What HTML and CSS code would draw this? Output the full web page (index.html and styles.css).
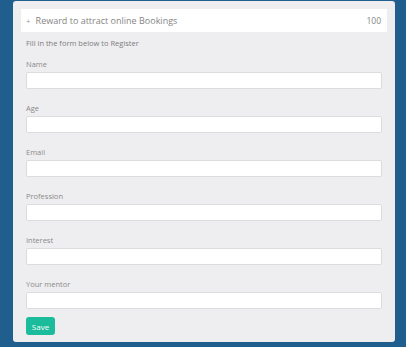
FILE: index.html
```html
<!DOCTYPE html>
<html>
<head>
	<meta charset="utf-8" />
	<title>Register</title>
	<link rel="stylesheet" href="styles.css">
</head>
<body>
	<div class="card">
		<div class="reward">
			<span class="reward-title"><span class="plus">+</span>Reward to attract online Bookings</span>
			<span class="reward-points">100</span>
		</div>

		<form class="register">
			<p class="intro">Fill in the form below to Register</p>

			<div class="field">
				<label for="name">Name</label>
				<input id="name" type="text">
			</div>
			<div class="field">
				<label for="age">Age</label>
				<input id="age" type="text">
			</div>
			<div class="field">
				<label for="email">Email</label>
				<input id="email" type="text">
			</div>
			<div class="field">
				<label for="profession">Profession</label>
				<input id="profession" type="text">
			</div>
			<div class="field">
				<label for="interest">Interest</label>
				<input id="interest" type="text">
			</div>
			<div class="field last">
				<label for="mentor">Your mentor</label>
				<input id="mentor" type="text">
			</div>

			<button type="button" class="save">Save</button>
		</form>
	</div>
</body>
</html>
```

FILE: styles.css
```css
* {
	margin: 0;
	padding: 0;
	box-sizing: border-box;
}

html, body {
	height: 100%;
}

body {
	background-color: #1f5e8d;
	font-family: "Open Sans", "Noto Sans", sans-serif;
	padding: 1px 11px 0 13px;
}

.card {
	background-color: #eeeef0;
	border-radius: 3px;
	padding: 8px 8px 7px 8px;
}

/* Reward strip */

.reward {
	display: flex;
	justify-content: space-between;
	align-items: center;
	background-color: white;
	height: 23px;
	padding: 0 6px 0 5px;
	color: #858585;
}

.reward-title {
	font-size: 9px;
}

.plus {
	font-size: 8px;
	margin-right: 5px;
	color: #9a9a9a;
}

.reward-points {
	font-size: 8.5px;
}

/* Form */

.register {
	padding: 0 5px;
}

.intro {
	font-size: 7.5px;
	line-height: 14px;
	color: #7c7c7c;
	margin: 4px 0 7px;
}

.field {
	margin-bottom: 12px;
}

.field.last {
	margin-bottom: 8px;
}

.field label {
	display: block;
	font-size: 7.5px;
	line-height: 14px;
	margin-bottom: 1px;
	color: #8a8a8a;
}

.field input {
	display: block;
	width: 100%;
	height: 17px;
	background-color: white;
	border: 1px solid #dcdcdc;
	border-radius: 2px;
}

.save {
	display: block;
	background-color: #1abc9c;
	color: white;
	border: none;
	border-radius: 3px;
	width: 29px;
	height: 18px;
	font-family: inherit;
	font-size: 8px;
}
```
